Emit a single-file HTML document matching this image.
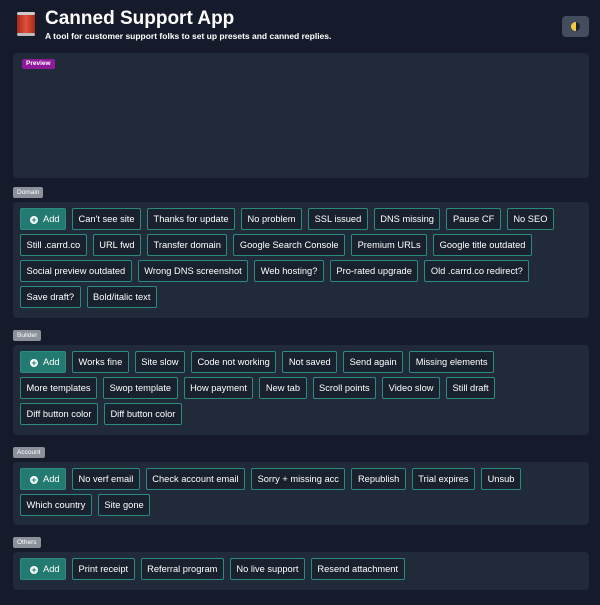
<!DOCTYPE html>
<html><head><style>
*{box-sizing:border-box;margin:0;padding:0}
body{width:600px;height:605px;background:#151b2a;font-family:"Liberation Sans",sans-serif;color:#fff;position:relative;overflow:hidden}
h1{position:absolute;left:45px;top:8px;font-size:19px;font-weight:bold}
.sub{position:absolute;left:45px;top:31px;font-size:8.5px;font-weight:bold}
.can{position:absolute;left:17px;top:12px;width:18px;height:24px;border-radius:4px;background:linear-gradient(90deg,#a52a1a,#e0503a,#a52a1a)}
.can:before{content:"";position:absolute;left:0;right:0;top:0;height:3px;background:#ccc;border-radius:3px}
.can:after{content:"";position:absolute;left:0;right:0;bottom:0;height:3px;background:#bbb;border-radius:3px}
.toggle{position:absolute;left:562px;top:16px;width:27px;height:21px;border-radius:4px;background:#444d5e}
.toggle i{position:absolute;left:9px;top:6px;width:9px;height:9px;border-radius:50%;background:linear-gradient(90deg,#f5c842 55%,#1d2230 55%)}
.panel{position:absolute;left:13px;width:576px;background:#212a38;border-radius:4px;padding:6px 7px}
.lab{position:absolute;left:13px;height:11px;padding:0 4px;font-size:6.5px;line-height:11px;background:#8b909b;border-radius:2px;color:#fff}
.prev{position:absolute;left:22px;top:59px;height:10px;padding:0 4px;font-size:6.5px;line-height:10px;background:#8e1a9a;border-radius:2px;font-weight:bold}
.row{display:flex;gap:6px;margin-bottom:4px;height:22px}
.b{height:22px;padding:0 5.5px;border:1px solid #2b8b80;background:#19212e;border-radius:2px;font-size:9.3px;line-height:20px;white-space:nowrap;color:#fff;flex:none}
.add{background:#237a70;width:46px;padding:0 0 0 9px}
.add:before{content:"+";display:inline-block;width:8px;height:8px;border-radius:50%;background:#fff;color:#237a70;font-size:9px;line-height:8px;text-align:center;font-weight:bold;margin-right:5px;vertical-align:-1px}
</style></head><body>
<div class="can"></div>
<h1>Canned Support App</h1>
<div class="sub">A tool for customer support folks to set up presets and canned replies.</div>
<div class="toggle"><i></i></div>
<div class="panel" style="top:53px;height:125px"></div>
<div class="prev">Preview</div>

<div class="lab" style="top:187px">Domain</div>
<div class="panel" style="top:202px;height:116px">
<div class="row"><span class="b add">Add</span><span class="b">Can't see site</span><span class="b">Thanks for update</span><span class="b">No problem</span><span class="b">SSL issued</span><span class="b">DNS missing</span><span class="b">Pause CF</span><span class="b">No SEO</span></div>
<div class="row"><span class="b">Still .carrd.co</span><span class="b">URL fwd</span><span class="b">Transfer domain</span><span class="b">Google Search Console</span><span class="b">Premium URLs</span><span class="b">Google title outdated</span></div>
<div class="row"><span class="b">Social preview outdated</span><span class="b">Wrong DNS screenshot</span><span class="b">Web hosting?</span><span class="b">Pro-rated upgrade</span><span class="b">Old .carrd.co redirect?</span></div>
<div class="row"><span class="b">Save draft?</span><span class="b">Bold/italic text</span></div>
</div>

<div class="lab" style="top:330px">Builder</div>
<div class="panel" style="top:345px;height:90px">
<div class="row"><span class="b add">Add</span><span class="b">Works fine</span><span class="b">Site slow</span><span class="b">Code not working</span><span class="b">Not saved</span><span class="b">Send again</span><span class="b">Missing elements</span></div>
<div class="row"><span class="b">More templates</span><span class="b">Swop template</span><span class="b">How payment</span><span class="b">New tab</span><span class="b">Scroll points</span><span class="b">Video slow</span><span class="b">Still draft</span></div>
<div class="row"><span class="b">Diff button color</span><span class="b">Diff button color</span></div>
</div>

<div class="lab" style="top:447px">Account</div>
<div class="panel" style="top:462px;height:63px">
<div class="row"><span class="b add">Add</span><span class="b">No verf email</span><span class="b">Check account email</span><span class="b">Sorry + missing acc</span><span class="b">Republish</span><span class="b">Trial expires</span><span class="b">Unsub</span></div>
<div class="row"><span class="b">Which country</span><span class="b">Site gone</span></div>
</div>

<div class="lab" style="top:537px">Others</div>
<div class="panel" style="top:552px;height:38px">
<div class="row"><span class="b add">Add</span><span class="b">Print receipt</span><span class="b">Referral program</span><span class="b">No live support</span><span class="b">Resend attachment</span></div>
</div>
</body></html>
